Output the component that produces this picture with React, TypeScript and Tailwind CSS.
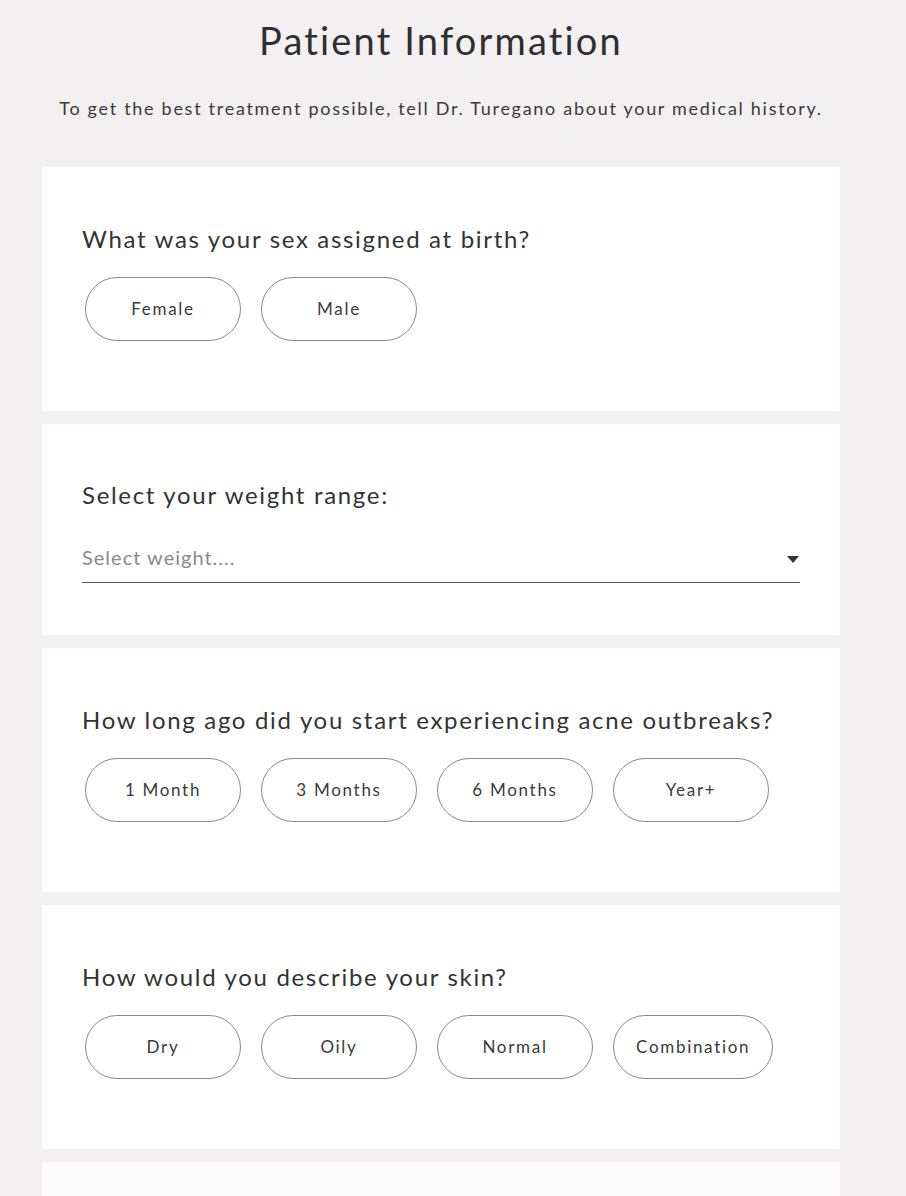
const options: { question: string; choices: string[] }[] = [
  { question: "What was your sex assigned at birth?", choices: ["Female", "Male"] },
  { question: "How long ago did you start experiencing acne outbreaks?", choices: ["1 Month", "3 Months", "6 Months", "Year+"] },
  { question: "How would you describe your skin?", choices: ["Dry", "Oily", "Normal", "Combination"] },
];

const Pill = ({ label }: { label: string }) => (
  <button className="min-w-[156px] px-[22px] h-[64px] rounded-full border border-[#8a8a8a] bg-white text-[17px] tracking-[0.1em] text-[#3a3a3a]">
    {label}
  </button>
);

const ChoiceCard = ({ question, choices }: { question: string; choices: string[] }) => (
  <div className="bg-white pl-[43px] pr-10 pt-[56px] pb-[70px]">
    <h2 className="text-[24px] leading-[32px] text-[#333] ml-[-3px] tracking-[0.07em] whitespace-nowrap">{question}</h2>
    <div className="mt-[22px] flex gap-5">
      {choices.map((c) => (
        <Pill key={c} label={c} />
      ))}
    </div>
  </div>
);

export default function App() {
  return (
    <div className="min-h-[1196px] bg-[#f2f0f1] font-['Lato',sans-serif] overflow-hidden">
      <div className="w-[882px]">
        <h1 className="pt-[17px] text-center text-[38px] leading-[46px] text-[#2f2f2f] tracking-[0.057em]">Patient Information</h1>
        <p className="mt-[33px] text-center text-[18px] leading-[24px] text-[#3a3a3a] tracking-[0.095em] whitespace-nowrap">
          To get the best treatment possible, tell Dr. Turegano about your medical history.
        </p>
        <div className="mx-[42px] mt-[47px] flex flex-col gap-[13px]">
          <ChoiceCard question={options[0].question} choices={options[0].choices} />
          <div className="bg-white px-10 pt-[55px] pb-[52px]">
            <h2 className="text-[24px] leading-[32px] text-[#333] tracking-[0.07em]">Select your weight range:</h2>
            <div className="mt-[34px] flex items-center justify-between border-b border-[#555] pb-[13px]">
              <span className="text-[20px] leading-[24px] text-[#8a8a8a] tracking-[0.05em]">Select weight....</span>
              <svg width="12" height="7" viewBox="0 0 12 7" className="mr-[1px] mt-[4px]">
                <path d="M0 0h12L6 7z" fill="#333" />
              </svg>
            </div>
          </div>
          <ChoiceCard question={options[1].question} choices={options[1].choices} />
          <ChoiceCard question={options[2].question} choices={options[2].choices} />
          <div className="bg-[#fbfbfb] h-[60px]" />
        </div>
      </div>
    </div>
  );
}
